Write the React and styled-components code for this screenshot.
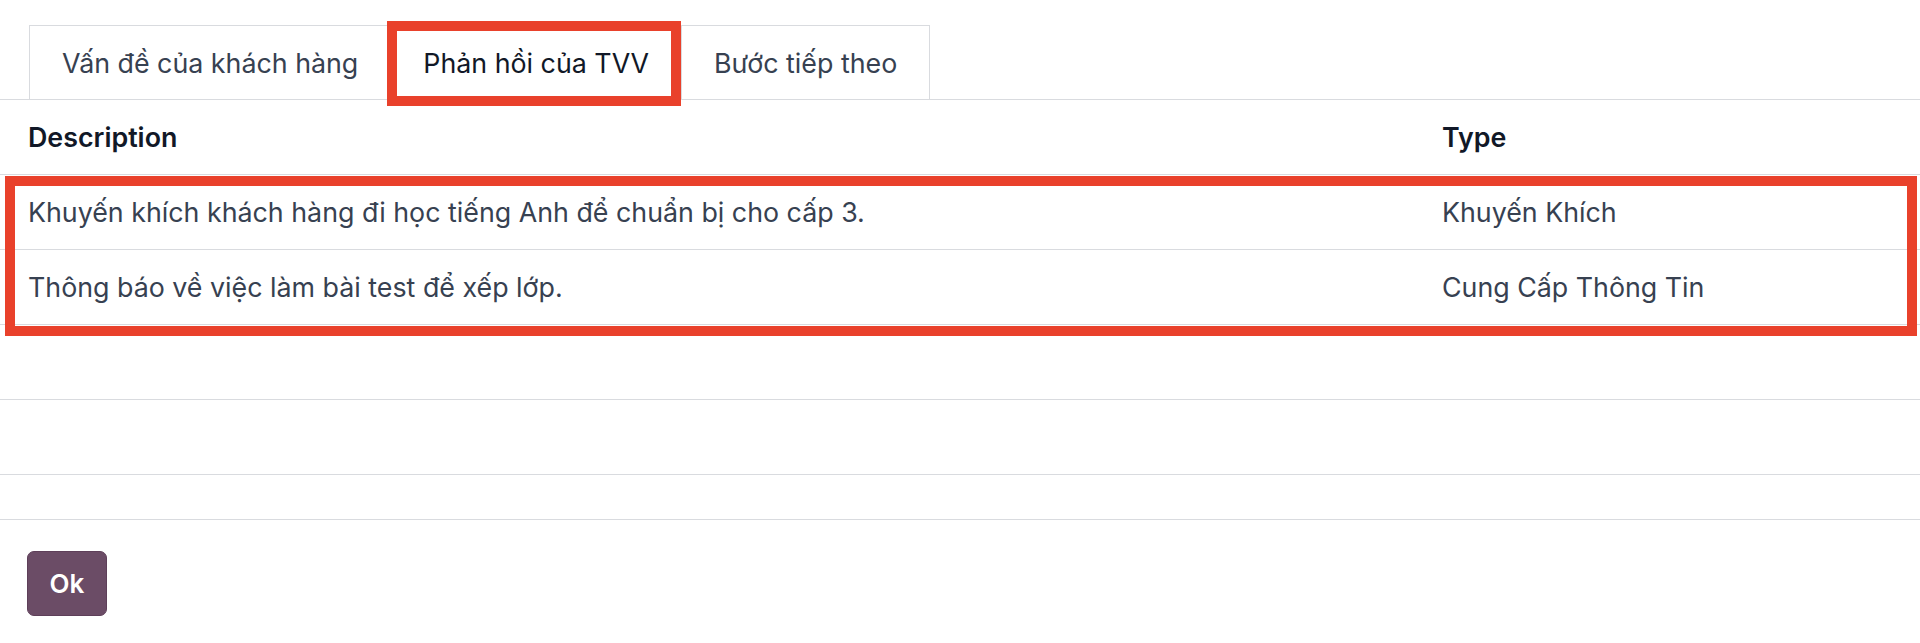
import React from "react";
import styled, { createGlobalStyle } from "styled-components";

const GlobalStyle = createGlobalStyle`
  html, body { margin: 0; padding: 0; background: #ffffff; }
  body {
    font-family: Inter, "Noto Sans", "Liberation Sans", sans-serif;
    -webkit-font-smoothing: antialiased;
  }
`;

const ANNOTATION = "#e9412b";
const LINE = "#d9dbdf";

const Page = styled.div`
  width: 1920px;
  display: flex;
  flex-direction: column;
`;

const TabBar = styled.div`
  display: flex;
  padding: 25px 0 0 29px;
  border-bottom: 1px solid ${LINE};
`;

const Tab = styled.div`
  position: relative;
  box-sizing: border-box;
  height: 74px;
  display: flex;
  align-items: center;
  padding: 0 32px;
  border: 1px solid ${LINE};
  border-bottom: none;
  background: #ffffff;
  font-size: 26.8px;
  color: ${(p) => (p.$active ? "#111827" : "#374151")};
  & + & { margin-left: -1px; }

  ${(p) =>
    p.$marked &&
    `
    z-index: 1;
    &::after {
      content: "";
      position: absolute;
      left: -4px;
      right: 0;
      top: -5px;
      bottom: -7px;
      border: 10px solid ${ANNOTATION};
      box-sizing: border-box;
      pointer-events: none;
    }
  `}
`;

const Grid = styled.div`
  display: flex;
  flex-direction: column;
`;

const Row = styled.div`
  box-sizing: border-box;
  display: grid;
  grid-template-columns: 1414px 1fr;
  height: ${(p) => p.$h || 75}px;
  border-bottom: 1px solid ${LINE};
  align-items: center;
`;

const Cell = styled.div`
  padding-left: 28px;
  font-size: 26.8px;
  white-space: nowrap;
  color: ${(p) => (p.$head ? "#111827" : "#374151")};
  font-weight: ${(p) => (p.$head ? 600 : 400)};
`;

const MarkedGroup = styled.div`
  position: relative;
  display: flex;
  flex-direction: column;
  &::after {
    content: "";
    position: absolute;
    left: 5px;
    right: 3px;
    top: 1px;
    bottom: -11px;
    border: 10px solid ${ANNOTATION};
    box-sizing: border-box;
    pointer-events: none;
  }
`;

const Footer = styled.div`
  display: flex;
  padding: 31px 0 0 27px;
`;

const OkButton = styled.button`
  box-sizing: border-box;
  width: 80px;
  height: 65px;
  border-radius: 7px;
  border: 1px solid #5e3f59;
  background: #6b4c66;
  color: #ffffff;
  font-family: Inter, "Noto Sans", sans-serif;
  font-size: 26px;
  font-weight: 600;
  cursor: pointer;
`;

const tabs = [
  { label: "Vấn đề của khách hàng" },
  { label: "Phản hồi của TVV", active: true, marked: true },
  { label: "Bước tiếp theo" },
];

const rows = [
  {
    desc: "Khuyến khích khách hàng đi học tiếng Anh để chuẩn bị cho cấp 3.",
    type: "Khuyến Khích",
  },
  { desc: "Thông báo về việc làm bài test để xếp lớp.", type: "Cung Cấp Thông Tin" },
];

export default function App() {
  return (
    <Page>
      <GlobalStyle />
      <TabBar>
        {tabs.map((t) => (
          <Tab key={t.label} $active={t.active} $marked={t.marked}>
            {t.label}
          </Tab>
        ))}
      </TabBar>
      <Grid>
        <Row>
          <Cell $head>Description</Cell>
          <Cell $head>Type</Cell>
        </Row>
        <MarkedGroup>
          {rows.map((r) => (
            <Row key={r.desc}>
              <Cell>{r.desc}</Cell>
              <Cell>{r.type}</Cell>
            </Row>
          ))}
        </MarkedGroup>
        <Row />
        <Row />
        <Row $h={45} />
      </Grid>
      <Footer>
        <OkButton>Ok</OkButton>
      </Footer>
    </Page>
  );
}
